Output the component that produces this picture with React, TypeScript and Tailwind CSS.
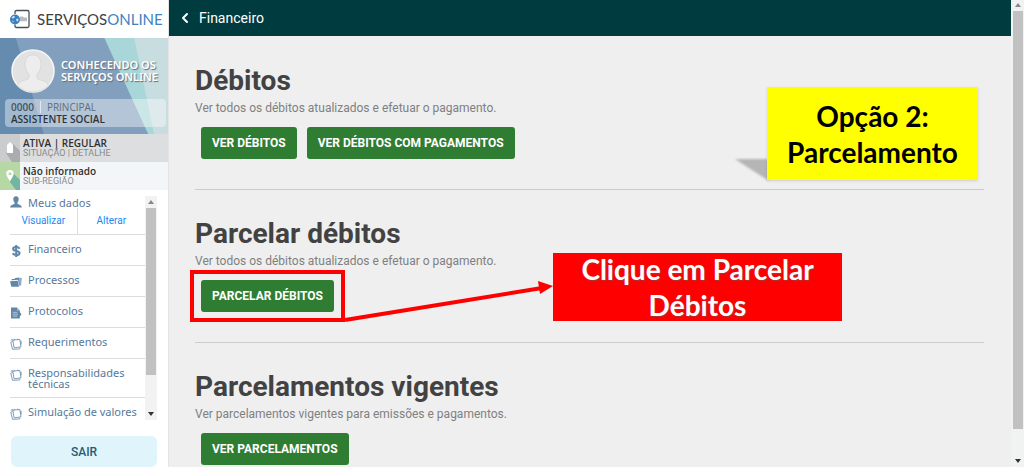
import React from 'react';
import { ChevronLeft } from 'lucide-react';

type IconProps = { className?: string };

const UserIcon: React.FC<IconProps> = ({ className }) => (
  <svg viewBox="0 0 12 12" className={className} fill="currentColor" aria-hidden="true">
    <path d="M6 0.3C7.8 0.3 8.7 1.4 8.7 3.2c0 1.3-.5 2.6-1.3 3.3v1.2c.3.8 4.3.9 4.5 3.8H.1C.3 8.6 4.3 8.5 4.6 7.7V6.5C3.8 5.8 3.3 4.5 3.3 3.2 3.3 1.4 4.2.3 6 .3z" />
  </svg>
);

const DollarIcon: React.FC<IconProps> = ({ className }) => (
  <svg viewBox="0 0 12 12" className={className} fill="none" stroke="currentColor" strokeWidth="2" aria-hidden="true">
    <path d="M9.6 3.7C9 2.5 7.600 2.100 6.200 2.100c-1.800 0-3.100.6-3.100 1.800 0 2.900 6.500 1.200 6.500 4.200 0 1.300-1.500 1.900-3.300 1.900-1.600 0-3-.5-3.600-1.700M6.200 0v12" />
  </svg>
);

const FolderIcon: React.FC<IconProps> = ({ className }) => (
  <svg viewBox="0 0 12 12" className={className} fill="currentColor" aria-hidden="true">
    <path d="M0 5.2l7.7-.5 1.3 6H1.300z" />
    <path d="M1.5 4.3l.4-1.2 2.6-.2.7-.8 4.3-.5.4 8-.9-.1-.9-5.700z" />
    <path d="M10.3 1.7l1.300.2-.5 7.6h-.8z" />
  </svg>
);

const FileIcon: React.FC<IconProps> = ({ className }) => (
  <svg viewBox="0 0 12 12" className={className} aria-hidden="true">
    <path fill="currentColor" d="M1 .5h6L9.8 3.5V5L11.5 7.2 9.8 9.5v2H1z" />
    <path stroke="#c9d8e4" strokeWidth=".8" d="M2.7 5.3h4.6M2.7 7.2h5.3M2.7 9.1h4.6" />
    <path fill="#a9c0d2" d="M7 .5v3h2.8z" />
  </svg>
);

const PapersIcon: React.FC<IconProps> = ({ className }) => (
  <svg viewBox="0 0 12 12" className={className} fill="none" stroke="currentColor" strokeWidth=".8" aria-hidden="true">
    <path d="M2.8 2.1l7-.6 1.2 7.300-6.900 1.100z" />
    <path d="M2.600 3.500L.8 4.200l1.700 7.100 7-.3.5-1.400M.8 2.300l1.600-.8.6 1M3.800 1.200l1.200.9M7.600.7l.9 1.200M10.200 3l1.100.5-.3 3" />
  </svg>
);

const LogoIcon: React.FC<IconProps> = ({ className }) => (
  <svg viewBox="0 0 21 20" className={className} aria-hidden="true">
    <path d="M5 5V3c0-1 .5-1.500 1.500-1.500h11c1 0 1.500.5 1.500 1.500v14c0 1-.5 1.500-1.500 1.500h-11C5.500 18.500 5 18 5 17v-1.500" fill="none" stroke="#4b4f54" strokeWidth="1.300" />
    <circle cx="5" cy="10.500" r="5" fill="#3a7fc0" />
    <path d="M1.500 8.500l2-1.500 1.500.6-.8 1.400-1.500.6zM6 10.200l2-.6.5 1.600-1.400 1.500zM2 11.500l1.600.6-.4 1.600z" fill="#d7e8f5" />
    <path d="M10 7.500h3l.8.9h3.200v3.900h-7z" fill="#b9bcbf" />
  </svg>
);

const Triangle: React.FC<IconProps & { down?: boolean }> = ({ className, down }) => (
  <svg viewBox="0 0 6 4" className={className} fill="currentColor" aria-hidden="true">
    <path d={down ? 'M0 0h6L3 4z' : 'M0 4h6L3 0z'} />
  </svg>
);

const menuItems = [
  { label: 'Financeiro', icon: DollarIcon },
  { label: 'Processos', icon: FolderIcon },
  { label: 'Protocolos', icon: FileIcon },
  { label: 'Requerimentos', icon: PapersIcon },
  { label: 'Responsabilidades técnicas', icon: PapersIcon },
  { label: 'Simulação de valores', icon: PapersIcon },
];

const ActionButton: React.FC<{ children: React.ReactNode }> = ({ children }) => (
  <button
    type="button"
    className="h-8 rounded-[3px] bg-[#2e7d32] px-[11px] text-[12px] font-bold text-white hover:bg-[#27692a]"
  >
    {children}
  </button>
);

const Section: React.FC<{ title: string; text: string; children: React.ReactNode }> = ({ title, text, children }) => (
  <section className="border-b border-[#cccccc] pb-[30px] pt-7 last:border-b-0 last:pb-0">
    <h2 className="text-[28px] font-bold leading-8 text-[#424242]">{title}</h2>
    <p className="mt-[3px] text-[12px] leading-4 text-[#808080]">{text}</p>
    <div className="ml-1.5 mt-[11px] flex flex-wrap gap-2.5">{children}</div>
  </section>
);

const ProfileCard = () => (
  <div className="relative h-24 overflow-hidden bg-[#829fbe]">
    <svg viewBox="0 0 169 96" preserveAspectRatio="none" className="absolute inset-0 h-full w-full" aria-hidden="true">
      <path d="M0 0h16l28 96H0z" fill="#658caf" />
      <path d="M105 0h64v96h-20z" fill="#a9d6d8" />
      <path d="M135 0h34v96h-14z" fill="#c8dde0" />
    </svg>
    <div className="relative flex items-center gap-1.5 pl-[11px] pt-[11px]">
      <svg viewBox="0 0 44 44" className="h-11 w-11 shrink-0" role="img" aria-label="Foto">
        <circle cx="22" cy="22" r="21" fill="#e2e2e2" stroke="#f5f5f5" strokeWidth="1.500" />
        <path d="M22 6c5 0 8 3.500 8 9 0 5-2 8.500-4 10v4c2 2.500 9 2 11.500 7A21 21 0 0 1 6.500 36C9 31 16 31.500 18 29v-4c-2-1.500-4-5-4-10 0-5.500 3-9 8-9z" fill="#ededed" stroke="#cfcfcf" strokeWidth=".6" />
      </svg>
      <p className="font-['Noto_Sans',sans-serif] text-[11px] font-semibold leading-3 text-white [text-shadow:1px_1px_1px_#607080]">
        CONHECENDO OS<br />SERVIÇOS ONLINE
      </p>
    </div>
    <div className="relative ml-[5px] mr-0.5 mt-1.5 rounded bg-white/40 px-1.5 py-0.5 font-['Open_Sans',sans-serif] text-[10px] leading-3">
      <p className="flex gap-1.5 text-[#5f6e7b]">
        <span className="border-r border-white/60 pr-1.5 font-semibold text-[#45535f]">0000</span>PRINCIPAL
      </p>
      <p className="font-semibold text-[#2d343b]">ASSISTENTE SOCIAL</p>
    </div>
  </div>
);

const Sidebar = () => (
  <aside className="flex w-[169px] shrink-0 flex-col border-r border-[#e4e4e4] bg-white">
    <a href="#" className="flex h-[38px] items-center gap-1.5 pl-2.5 font-[Lato,sans-serif] text-[15px]">
      <LogoIcon className="h-5 w-[21px] shrink-0" />
      <span className="text-[#3d4145]">SERVIÇOS<span className="text-[#4182c0]">ONLINE</span></span>
    </a>
    <ProfileCard />
    <div className="flex h-7 bg-[#dcdee0] font-['Open_Sans',sans-serif]">
      <svg viewBox="0 0 20 28" className="h-7 w-5 shrink-0" aria-hidden="true">
        <path d="M0 0h20v28H0z" fill="#cbccce" />
        <path d="M13 10l7 7v11h-8l-6-9z" fill="#aaadb0" />
        <path d="M7 19v-8l3-3 3 3v8z" fill="#fff" />
      </svg>
      <div className="pl-[3px] pt-1 text-[10px] leading-[10px]">
        <p className="font-semibold text-[#303030]">ATIVA | REGULAR</p>
        <p className="font-[Roboto,sans-serif] text-[9px] text-[#8b8b8b]">SITUAÇÃO | DETALHE</p>
      </div>
    </div>
    <div className="flex h-7 bg-[#f3f6f8] font-['Open_Sans',sans-serif]">
      <svg viewBox="0 0 20 28" className="h-7 w-5 shrink-0" aria-hidden="true">
        <path d="M0 0h20v28H0z" fill="#b7d8a4" />
        <path d="M13 11l7 7v10h-4l-6-8z" fill="#73b5a3" />
        <path fillRule="evenodd" d="M10 8a3.700 3.700 0 0 1 3.700 3.700C13.700 14 10 19 10 19s-3.700-5-3.700-7.300A3.700 3.700 0 0 1 10 8zm0 2.200a1.500 1.500 0 1 0 0 3 1.500 1.500 0 0 0 0-3z" fill="#fff" />
      </svg>
      <div className="pl-[3px] pt-1 text-[10px] leading-[10px]">
        <p className="font-semibold text-[#303030]">Não informado</p>
        <p className="font-[Roboto,sans-serif] text-[9px] text-[#8b8b8b]">SUB-REGIÃO</p>
      </div>
    </div>

    <div className="flex pl-2.5 pr-[11px] pt-1.5">
      <nav className="flex-1 font-['Noto_Sans',sans-serif] text-[11px] leading-[11px] text-[#55799c]">
        <div className="border-b border-[#dcdcdc]">
          <a href="#" className="flex items-center gap-1.5">
            <UserIcon className="h-3 w-3 text-[#6086a8]" />
            Meus dados
          </a>
          <div className="grid grid-cols-2 text-center font-[Roboto,sans-serif] text-[10px] leading-[26px] text-[#2088f5]">
            <a href="#" className="border-r border-[#dcdcdc]">Visualizar</a>
            <a href="#">Alterar</a>
          </div>
        </div>
        {menuItems.map(({ label, icon: Icon }) => (
          <a
            key={label}
            href="#"
            className="flex gap-1.5 border-b border-[#dcdcdc] py-2 last:border-b-0 last:pb-0"
          >
            <Icon className="mt-0.5 h-3 w-3 shrink-0 text-[#6086a8]" />
            <span>{label}</span>
          </a>
        ))}
      </nav>
      <div className="flex w-3 shrink-0 flex-col items-center bg-[#f2f2f2] text-[#888888]">
        <Triangle className="my-1 h-1 w-1.5" />
        <div className="w-[10px] grow-[5] bg-[#c1c1c1]" />
        <div className="grow" />
        <Triangle down className="my-1 h-1 w-1.5 text-[#333333]" />
      </div>
    </div>

    <button
      type="button"
      className="mx-[11px] mt-4 h-[31px] rounded-md bg-[#dff5fb] font-[Roboto,sans-serif] text-[12px] font-medium text-[#285a75]"
    >
      SAIR
    </button>
  </aside>
);

const App: React.FC = () => {
  return (
    <div className="flex min-h-screen bg-[#efefef] font-[Roboto,sans-serif]">
      <Sidebar />

      <div className="relative min-w-0 flex-1">
        <header className="flex h-9 items-center bg-[#003c3f] pl-2 text-white">
          <button type="button" aria-label="Voltar">
            <ChevronLeft className="h-4 w-4" strokeWidth={3} />
          </button>
          <h1 className="ml-1.5 text-[14px]">Financeiro</h1>
        </header>

        <main className="pl-[26px] pr-[27px] pt-px">
          <Section title="Débitos" text="Ver todos os débitos atualizados e efetuar o pagamento.">
            <ActionButton>VER DÉBITOS</ActionButton>
            <ActionButton>VER DÉBITOS COM PAGAMENTOS</ActionButton>
          </Section>
          <Section title="Parcelar débitos" text="Ver todos os débitos atualizados e efetuar o pagamento.">
            <div className="relative">
              <ActionButton>PARCELAR DÉBITOS</ActionButton>
              <div className="pointer-events-none absolute -inset-x-[11px] -inset-y-2.5 border-4 border-[#ff0000]" />
            </div>
          </Section>
          <Section title="Parcelamentos vigentes" text="Ver parcelamentos vigentes para emissões e pagamentos.">
            <ActionButton>VER PARCELAMENTOS</ActionButton>
          </Section>
        </main>

        {/* Callouts over the page */}
        <svg viewBox="0 0 210 44" className="pointer-events-none absolute left-[175px] top-[281px] h-11 w-[210px]" aria-hidden="true">
          <path d="M1 39L198 7" stroke="#ff0000" strokeWidth="4" />
          <path d="M194 0l15 5-13 8z" fill="#ff0000" />
        </svg>
        <div className="absolute left-[384px] top-[253px] flex h-[68px] w-[289px] items-center justify-center bg-[#ff0000] px-4 text-center font-[Lato,sans-serif] text-[28px] font-bold leading-9 text-white [text-shadow:1px_1px_1px_#a33]">
          Clique em Parcelar Débitos
        </div>
        <svg viewBox="0 0 36 28" className="pointer-events-none absolute left-[564px] top-[156px] h-7 w-9" aria-hidden="true">
          <path d="M2 3h34v22z" fill="#b5b5b5" className="blur-[1px]" />
        </svg>
        <div className="absolute left-[598px] top-[87px] flex h-[93px] w-[211px] items-center justify-center bg-[#ffff00] text-center font-[Lato,sans-serif] text-[28px] font-bold leading-9 text-black shadow-sm">
          Opção 2:<br />Parcelamento
        </div>
      </div>

      <div className="flex w-[13px] shrink-0 flex-col items-center bg-[#f1f3f3]">
        <Triangle className="mb-1 mt-[3px] h-1 w-1.5 text-[#888888]" />
        <div className="w-[10px] grow-[16] bg-[#c1c1c1]" />
        <div className="grow" />
        <Triangle down className="my-1 h-1 w-1.5 text-[#333333]" />
      </div>
    </div>
  );
};

export default App;
